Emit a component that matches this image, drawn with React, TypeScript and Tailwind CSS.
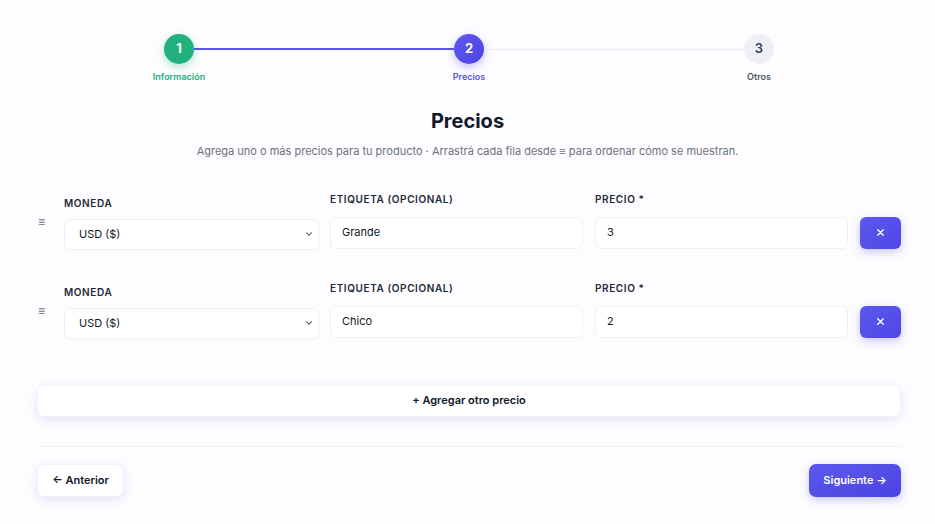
import React from "react";

function ChevronDown() {
  return (
    <svg width="10" height="10" viewBox="0 0 24 24" fill="none" stroke="#374151" strokeWidth="2.5" strokeLinecap="round" strokeLinejoin="round">
      <path d="M6 9l6 6 6-6" />
    </svg>
  );
}

function XIcon() {
  return (
    <svg width="11" height="11" viewBox="0 0 24 24" fill="none" stroke="white" strokeWidth="3" strokeLinecap="round">
      <path d="M6 6l12 12M18 6L6 18" />
    </svg>
  );
}

function Row({ label, value, top }: { label: string; value: string; top: boolean }) {
  return (
    <div className={`flex items-center ${top ? "" : "mt-[31px]"}`}>
      <div className="w-[27px] flex items-center justify-start pl-[1px] pt-[1px] text-[#6b7280] text-[12px] leading-none">≡</div>
      <div className="w-[255px] pt-[3px]">
        <div className="text-[10px] font-semibold tracking-[0.06em] text-[#1f2937] leading-[12px] mb-[10px]">MONEDA</div>
        <div className="h-[31px] rounded-[6px] border border-[#f1f1f5] bg-white flex items-center justify-between pl-[14px] pr-[4px] shadow-[0_1px_2px_rgba(0,0,0,0.02)]">
          <span className="text-[11px] text-[#111827]">USD ($)</span>
          <ChevronDown />
        </div>
      </div>
      <div className="w-[253px] ml-[11px] mb-[2px]">
        <div className="text-[10px] font-semibold tracking-[0.06em] text-[#1f2937] leading-[12px] mb-[12px]">ETIQUETA (OPCIONAL)</div>
        <div className="h-[32px] rounded-[6px] border border-[#f1f1f5] bg-white flex items-center pl-[11px]">
          <span className="text-[11px] text-[#111827]">{value}</span>
        </div>
      </div>
      <div className="w-[253px] ml-[12px] mb-[2px]">
        <div className="text-[10px] font-semibold tracking-[0.06em] text-[#1f2937] leading-[12px] mb-[12px]">PRECIO *</div>
        <div className="h-[32px] rounded-[6px] border border-[#f1f1f5] bg-white flex items-center pl-[11px]">
          <span className="text-[11px] text-[#111827]">{label}</span>
        </div>
      </div>
      <div className="ml-[12px] self-end mb-[2px]">
        <div className="w-[41px] h-[32px] rounded-[6px] bg-gradient-to-br from-[#5d58ee] to-[#4f46e5] flex items-center justify-center shadow-[0_3px_8px_rgba(79,70,229,0.3)]">
          <XIcon />
        </div>
      </div>
    </div>
  );
}

export default function App() {
  return (
    <div className="w-[935px] h-[524px] bg-[#fdfdff] overflow-hidden" style={{ fontFamily: "Inter, 'Liberation Sans', sans-serif" }}>
      {/* Stepper */}
      <div className="w-[610px] ml-[164px] pt-[34px]">
        <div className="flex items-center">
          <div className="w-[30px] h-[30px] rounded-full bg-[#22b07d] text-white text-[13px] font-bold flex items-center justify-center shadow-[0_3px_8px_rgba(34,176,125,0.35)]">1</div>
          <div className="flex-1 h-[2px] bg-[#5b54e6]" />
          <div className="w-[30px] h-[30px] rounded-full bg-gradient-to-br from-[#5f59ef] to-[#4b43e0] text-white text-[13px] font-bold flex items-center justify-center shadow-[0_3px_8px_rgba(79,70,229,0.35)]">2</div>
          <div className="flex-1 h-px bg-[#e8e9f1]" />
          <div className="w-[30px] h-[30px] rounded-full bg-[#eef0f6] text-[#374151] text-[13px] font-semibold flex items-center justify-center">3</div>
        </div>
        <div className="flex justify-between mt-[6px]">
          <div className="w-[30px] flex justify-center whitespace-nowrap text-[9px] font-semibold text-[#22b07d]">Información</div>
          <div className="w-[30px] flex justify-center whitespace-nowrap text-[9px] font-semibold text-[#5b54e6]">Precios</div>
          <div className="w-[30px] flex justify-center whitespace-nowrap text-[9px] font-semibold text-[#4b5563]">Otros</div>
        </div>
      </div>

      {/* Title */}
      <div className="text-center mt-[23px]">
        <div className="text-[20px] font-bold text-[#111827] leading-[28px]">Precios</div>
        <div className="text-[11px] text-[#6b7280] mt-[8px] leading-[16px]">Agrega uno o más precios para tu producto · Arrastrá cada fila desde ≡ para ordenar cómo se muestran.</div>
      </div>

      {/* Rows */}
      <div className="ml-[37px] w-[864px] mt-[34px]">
        <Row label="3" value="Grande" top />
        <Row label="2" value="Chico" top={false} />

        <div className="mt-[45px] h-[32px] rounded-[7px] bg-white border border-[#f3f2fb] flex items-center justify-center shadow-[0_3px_10px_rgba(99,90,230,0.16)]">
          <span className="text-[11px] font-semibold text-[#111827]">+ Agregar otro precio</span>
        </div>

        <div className="mt-[29px] h-px bg-[#f1f1f6]" />

        <div className="mt-[17px] flex justify-between">
          <div className="w-[87px] h-[33px] rounded-[7px] bg-white border border-[#f3f2fb] flex items-center justify-center shadow-[0_3px_10px_rgba(99,90,230,0.16)]">
            <span className="text-[11px] font-semibold text-[#111827]">← Anterior</span>
          </div>
          <div className="w-[92px] h-[33px] rounded-[7px] bg-gradient-to-br from-[#5d58ee] to-[#4b43e0] flex items-center justify-center shadow-[0_3px_10px_rgba(79,70,229,0.3)]">
            <span className="text-[11px] font-semibold text-white">Siguiente →</span>
          </div>
        </div>
      </div>
    </div>
  );
}
